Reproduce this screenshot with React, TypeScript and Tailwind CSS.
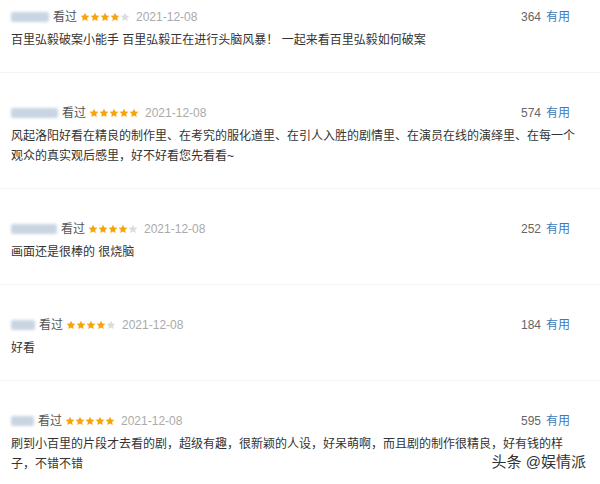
import type { ReactNode } from "react";

type Review = {
  userWidth: number;
  stars: number;
  date: string;
  votes: number;
  text: ReactNode;
};

const reviews: Review[] = [
  {
    userWidth: 38,
    stars: 4,
    date: "2021-12-08",
    votes: 364,
    text: "百里弘毅破案小能手 百里弘毅正在进行头脑风暴！ 一起来看百里弘毅如何破案",
  },
  {
    userWidth: 47,
    stars: 5,
    date: "2021-12-08",
    votes: 574,
    text: "风起洛阳好看在精良的制作里、在考究的服化道里、在引人入胜的剧情里、在演员在线的演绎里、在每一个观众的真实观后感里，好不好看您先看看~",
  },
  {
    userWidth: 46,
    stars: 4,
    date: "2021-12-08",
    votes: 252,
    text: "画面还是很棒的 很烧脑",
  },
  {
    userWidth: 24,
    stars: 4,
    date: "2021-12-08",
    votes: 184,
    text: "好看",
  },
  {
    userWidth: 23,
    stars: 5,
    date: "2021-12-08",
    votes: 595,
    text: "刷到小百里的片段才去看的剧，超级有趣，很新颖的人设，好呆萌啊，而且剧的制作很精良，好有钱的样子，不错不错",
  },
];

function Star({ on }: { on: boolean }) {
  return (
    <svg viewBox="0 0 24 24" className="h-[10px] w-[10px]">
      <path
        d="M12 1.5l3.1 6.7 7.4.9-5.4 5 1.4 7.4L12 17.8l-6.5 3.7 1.4-7.4-5.4-5 7.4-.9z"
        fill={on ? "#f6a40a" : "#dcdcdc"}
      />
    </svg>
  );
}

function ReviewItem({ review, last }: { review: Review; last: boolean }) {
  return (
    <div
      className={`pl-[11px] pr-[30px] ${last ? "pt-[30px] pb-[14px]" : "border-b border-[#f4f4f4] pt-[30px] pb-[22px]"}`}
    >
      <div className="flex h-5 items-center text-[12px] leading-5">
        <span
          className="h-[10px] rounded-[2px] bg-[#c9d5e2] blur-[1.5px]"
          style={{ width: review.userWidth }}
        />
        <span className="ml-[4px] text-[#555]">看过</span>
        <span className="ml-[3px] flex">
          {[0, 1, 2, 3, 4].map((i) => (
            <Star key={i} on={i < review.stars} />
          ))}
        </span>
        <span className="ml-[6px] text-[#aaa]">{review.date}</span>
        <span className="ml-auto text-[#666]">{review.votes}</span>
        <span className="ml-[5px] text-[#3d7ab8]">有用</span>
      </div>
      <p className="mt-[3px] w-[568px] text-[12px] leading-5 text-[#333]">
        {review.text}
      </p>
    </div>
  );
}

export default function App() {
  return (
    <div className="relative h-[484px] w-[600px] overflow-hidden bg-white font-['Liberation_Sans','Noto_Sans_CJK_SC',sans-serif]">
      <div className="-mt-[23px]">
        {reviews.map((review, i) => (
          <ReviewItem key={i} review={review} last={i === reviews.length - 1} />
        ))}
      </div>
      <div className="absolute right-[14px] top-[452px] text-[15px] leading-5 text-[#333] [text-shadow:0_0_2px_#fff]">
        头条 @娱情派
      </div>
    </div>
  );
}
